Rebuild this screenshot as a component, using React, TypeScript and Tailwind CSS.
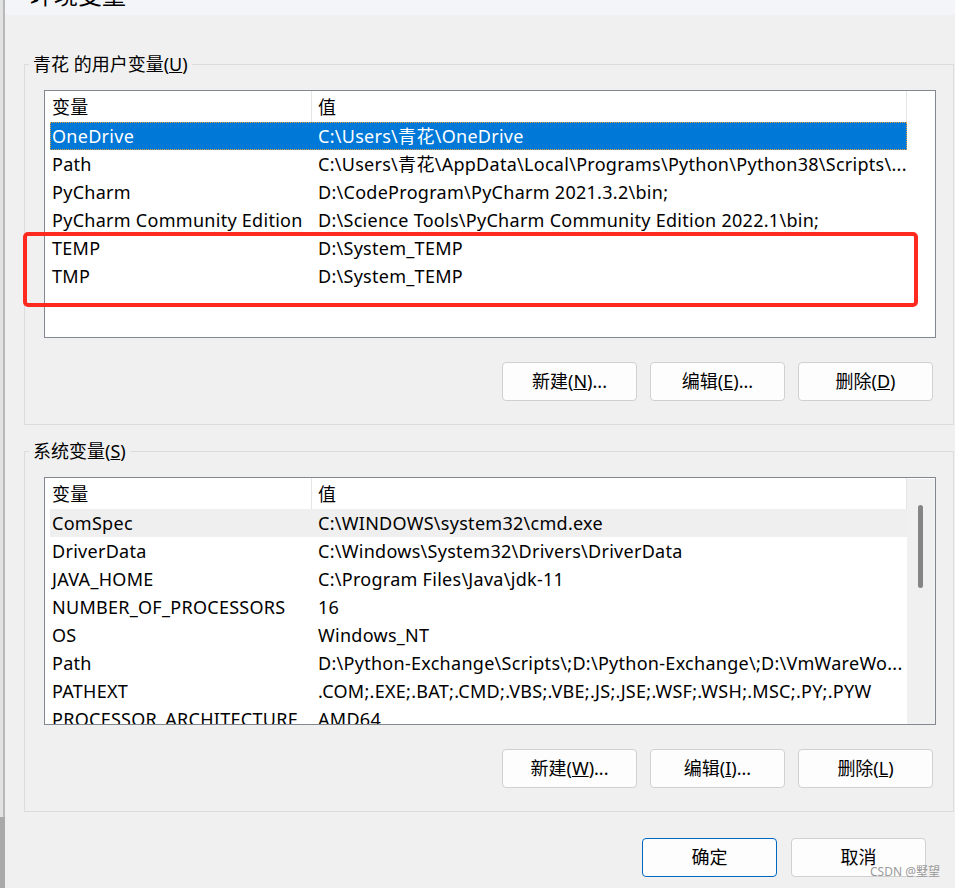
import React from "react";

type Row = { name: string; value: string; selected?: boolean; hover?: boolean };

const userRows: Row[] = [
  { name: "OneDrive", value: "C:\\Users\\青花\\OneDrive", selected: true },
  { name: "Path", value: "C:\\Users\\青花\\AppData\\Local\\Programs\\Python\\Python38\\Scripts\\..." },
  { name: "PyCharm", value: "D:\\CodeProgram\\PyCharm 2021.3.2\\bin;" },
  { name: "PyCharm Community Edition", value: "D:\\Science Tools\\PyCharm Community Edition 2022.1\\bin;" },
  { name: "TEMP", value: "D:\\System_TEMP" },
  { name: "TMP", value: "D:\\System_TEMP" },
];

const sysRows: Row[] = [
  { name: "ComSpec", value: "C:\\WINDOWS\\system32\\cmd.exe", hover: true },
  { name: "DriverData", value: "C:\\Windows\\System32\\Drivers\\DriverData" },
  { name: "JAVA_HOME", value: "C:\\Program Files\\Java\\jdk-11" },
  { name: "NUMBER_OF_PROCESSORS", value: "16" },
  { name: "OS", value: "Windows_NT" },
  { name: "Path", value: "D:\\Python-Exchange\\Scripts\\;D:\\Python-Exchange\\;D:\\VmWareWo..." },
  { name: "PATHEXT", value: ".COM;.EXE;.BAT;.CMD;.VBS;.VBE;.JS;.JSE;.WSF;.WSH;.MSC;.PY;.PYW" },
  { name: "PROCESSOR_ARCHITECTURE", value: "AMD64" },
];

function ListView({ rows, scrollbar }: { rows: Row[]; scrollbar?: boolean }) {
  return (
    <div className="w-[892px] h-[248px] border border-[#828790] bg-white flex overflow-hidden tracking-[0.28px]">
      <div className="w-[862px] flex flex-col overflow-hidden">
        <div className="h-[31px] shrink-0 pl-[5px] flex">
          <div className="w-[262px] border-r border-[#e5e5e5] pl-[2px] pt-[2px] leading-[29px]">变量</div>
          <div className="w-[595px] border-r border-[#e5e5e5] pl-[6px] pt-[2px] leading-[29px]">值</div>
        </div>
        <div className="pl-[5px]">
          {rows.map((r, i) => (
            <div
              key={i}
              className={
                "h-[28px] w-[857px] flex leading-[26px] border " +
                (r.selected
                  ? "bg-[#0078d7] text-white border-dotted border-[#e8a040]"
                  : r.hover
                  ? "bg-[#efefef] border-transparent"
                  : "border-transparent")
              }
            >
              <div className="w-[261px] pl-[1px] whitespace-nowrap overflow-hidden">{r.name}</div>
              <div className="flex-1 pl-[6px] whitespace-nowrap overflow-hidden">{r.value}</div>
            </div>
          ))}
        </div>
      </div>
      {scrollbar ? (
        <div className="w-[28px] bg-[#f0f0f0] mt-[1px] pl-[11px] pt-[26px]">
          <div className="w-[5px] h-[83px] rounded-full bg-[#858585]" />
        </div>
      ) : (
        <div className="w-[28px]" />
      )}
    </div>
  );
}

function Btn({ children, primary }: { children: React.ReactNode; primary?: boolean }) {
  return (
    <div
      className={
        "w-[135px] h-[39px] rounded-[4px] bg-[#fdfdfd] border flex items-center justify-center text-[18px] " +
        (primary ? "border-[#0067c0]" : "border-[#d0d0d0]")
      }
    >
      {children}
    </div>
  );
}

function Group({ label, children }: { label: React.ReactNode; children: React.ReactNode }) {
  return (
    <fieldset className="w-[930px] border border-[#dcdcdc] m-0 p-0 min-w-0">
      <legend className="ml-[4px] px-[4px] leading-[24px] text-[18px] p-0">{label}</legend>
      <div className="px-[19px] pt-[14px] pb-[23px]">{children}</div>
    </fieldset>
  );
}

export default function App() {
  return (
    <div
      className="w-[955px] h-[888px] flex bg-[#f0f0f0] overflow-hidden relative text-black text-[18px]"
      style={{ fontFamily: '"Noto Sans", "Noto Sans CJK SC", sans-serif' }}
    >
      <div className="w-[5px] flex flex-col shrink-0">
        <div className="h-[817px] bg-[#e2e2e2] border-r-2 border-[#b8b8b8]" />
        <div className="flex-1 bg-[#a9a9a9]" />
      </div>
      <div className="flex-1 flex flex-col">
        <div className="h-[15px] bg-[#f4f5f9] overflow-hidden pl-[25px]">
          <div className="text-[24px] leading-none -mt-[17px]">环境变量</div>
        </div>
        <div className="pl-[19px] pt-[37px] flex flex-col">
          <Group label={<>青花 的用户变量(<span className="underline">U</span>)</>}>
            <ListView rows={userRows} />
            <div className="mt-[24px] flex justify-end gap-[13px] pr-[1px]">
              <Btn>新建(<span className="underline">N</span>)...</Btn>
              <Btn>编辑(<span className="underline">E</span>)...</Btn>
              <Btn>删除(<span className="underline">D</span>)</Btn>
            </div>
          </Group>
          <div className="h-[14px]" />
          <Group label={<>系统变量(<span className="underline">S</span>)</>}>
            <ListView rows={sysRows} scrollbar />
            <div className="mt-[24px] flex justify-end gap-[13px] pr-[1px]">
              <Btn>新建(<span className="underline">W</span>)...</Btn>
              <Btn>编辑(<span className="underline">I</span>)...</Btn>
              <Btn>删除(<span className="underline">L</span>)</Btn>
            </div>
          </Group>
          <div className="mt-[26px] flex justify-end gap-[14px] pr-[29px]">
            <Btn primary>确定</Btn>
            <Btn>取消</Btn>
          </div>
        </div>
      </div>
      <div className="absolute left-[23px] top-[232px] w-[895px] h-[75px] border-4 border-[#ff2a1f] rounded-[5px]" />
      <div className="absolute right-[15px] top-[864px] text-[12px] leading-[16px] text-[#9a9a9a]">CSDN @墅望</div>
    </div>
  );
}
